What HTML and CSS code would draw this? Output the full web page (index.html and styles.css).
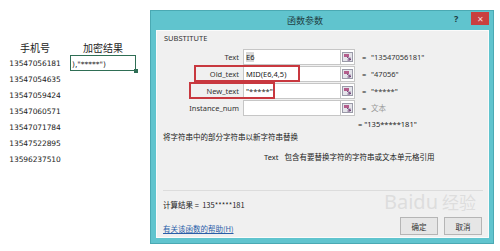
FILE: index.html
```html
<!DOCTYPE html>
<html lang="zh">

<head>
    <meta charset="utf-8">
    <meta name="viewport" content="width=device-width, initial-scale=1.0">
    <title>函数参数</title>

    <link rel="stylesheet" href="styles.css">

</head>

<body>

    <div class="page">

        <section class="sheet">
            <div class="sheet_head">
                <span class="col_a">手机号</span>
                <span class="col_b">加密结果</span>
            </div>
            <div class="sheet_row">
                <span class="col_a num">13547056181</span>
                <span class="col_b cell">),"*****")</span>
            </div>
            <div class="sheet_row"><span class="col_a num">13547054635</span></div>
            <div class="sheet_row"><span class="col_a num">13547059424</span></div>
            <div class="sheet_row"><span class="col_a num">13547060571</span></div>
            <div class="sheet_row"><span class="col_a num">13547071784</span></div>
            <div class="sheet_row"><span class="col_a num">13547522895</span></div>
            <div class="sheet_row"><span class="col_a num">13596237510</span></div>
        </section>

        <div class="dialog">
            <div class="titlebar">
                <span class="title">函数参数</span>
                <span class="help">?</span>
                <span class="close">✕</span>
            </div>

            <div class="content">
                <div class="fname">SUBSTITUTE</div>

                <div class="args">
                    <div class="arg">
                        <label>Text</label>
                        <span class="box"><b class="sel">E6</b></span>
                        <span class="pick"><svg width="11" height="10" viewBox="0 0 11 10"><rect x="0.5" y="0.5" width="10" height="9" fill="#e4e4ea" stroke="#9a9aa8"/><path d="M2 2h5v3H2z" fill="#b45d8c"/><path d="M5 5l4 3M8 5.5v2.5H5.5" stroke="#6a3a70" fill="none"/></svg></span>
                        <span class="eq">=</span>
                        <span class="val">"13547056181"</span>
                    </div>
                    <div class="arg">
                        <label>Old_text</label>
                        <span class="box">MID(E6,4,5)</span>
                        <span class="pick"><svg width="11" height="10" viewBox="0 0 11 10"><rect x="0.5" y="0.5" width="10" height="9" fill="#e4e4ea" stroke="#9a9aa8"/><path d="M2 2h5v3H2z" fill="#b45d8c"/><path d="M5 5l4 3M8 5.5v2.5H5.5" stroke="#6a3a70" fill="none"/></svg></span>
                        <span class="eq">=</span>
                        <span class="val">"47056"</span>
                        <span class="mark mark_old"></span>
                    </div>
                    <div class="arg">
                        <label>New_text</label>
                        <span class="box">"*****"</span>
                        <span class="pick"><svg width="11" height="10" viewBox="0 0 11 10"><rect x="0.5" y="0.5" width="10" height="9" fill="#e4e4ea" stroke="#9a9aa8"/><path d="M2 2h5v3H2z" fill="#b45d8c"/><path d="M5 5l4 3M8 5.5v2.5H5.5" stroke="#6a3a70" fill="none"/></svg></span>
                        <span class="eq">=</span>
                        <span class="val">"*****"</span>
                        <span class="mark mark_new"></span>
                    </div>
                    <div class="arg">
                        <label>Instance_num</label>
                        <span class="box"></span>
                        <span class="pick"><svg width="11" height="10" viewBox="0 0 11 10"><rect x="0.5" y="0.5" width="10" height="9" fill="#e4e4ea" stroke="#9a9aa8"/><path d="M2 2h5v3H2z" fill="#b45d8c"/><path d="M5 5l4 3M8 5.5v2.5H5.5" stroke="#6a3a70" fill="none"/></svg></span>
                        <span class="eq">=</span>
                        <span class="val dim">文本</span>
                    </div>
                </div>

                <div class="result">= "135*****181"</div>
                <p class="desc">将字符串中的部分字符串以新字符串替换</p>
                <p class="param"><span class="pname">Text</span>包含有要替换字符的字符串或文本单元格引用</p>

                <div class="foot">
                    <p class="calc">计算结果 =&nbsp; 135*****181</p>
                    <div class="foot_row">
                        <a href="#" class="helplink">有关该函数的帮助(H)</a>
                        <div class="buttons">
                            <button class="btn">确定</button>
                            <button class="btn">取消</button>
                        </div>
                    </div>
                </div>

                <span class="watermark">Baidu<small>经验</small></span>
            </div>
        </div>

    </div>

</body></html>
```

FILE: styles.css
```css
html {
    background-color: white;
}

body {
    margin: 0;
    font-family: "Noto Sans", "Noto Sans CJK SC", sans-serif;
    color: #222;
}

.page {
    display: flex;
    align-items: flex-start;
}

/* regnearket til venstre */

.sheet {
    width: 150px;
    padding-top: 40px;
    font-size: 8.5px;
}

.sheet_head {
    display: flex;
    height: 15px;
    align-items: center;
    font-family: "Noto Sans CJK SC", sans-serif;
    font-size: 10px;
}

.sheet_row {
    display: flex;
    height: 16px;
    align-items: center;
}

.col_a {
    width: 70px;
    text-align: center;
}

.col_b {
    width: 66px;
    text-align: center;
}

.num {
    font-family: "DejaVu Sans", sans-serif;
    font-size: 7.5px;
    letter-spacing: -0.1px;
}

.cell {
    position: relative;
    box-sizing: border-box;
    height: 16px;
    border: 1.5px solid #2f6e55;
    text-align: left;
    padding-left: 1px;
    font-family: "DejaVu Sans", sans-serif;
    font-size: 7.5px;
    line-height: 17px;
}

.cell::after {
    content: "";
    position: absolute;
    right: -3px;
    bottom: -3px;
    width: 4px;
    height: 4px;
    background: #2f6e55;
}

/* dialogboksen */

.dialog {
    margin-top: 10px;
    width: 344px;
    height: 234px;
    box-sizing: border-box;
    display: flex;
    flex-direction: column;
    overflow: hidden;
    background-color: #60c4ce;
    border: 1px solid #4aa9b3;
    padding: 0 4px 5px 5px;
}

.titlebar {
    height: 19px;
    flex-shrink: 0;
    display: flex;
    align-items: center;
}

.title {
    flex: 1;
    text-align: center;
    font-family: "Noto Sans CJK SC", sans-serif;
    font-size: 9px;
    color: #1f3f44;
}

.help {
    width: 12px;
    font-size: 9px;
    font-weight: bold;
    color: #1c3a40;
    margin-right: 5px;
    margin-top: -4px;
}

.close {
    width: 18px;
    height: 13px;
    background-color: #c9403f;
    color: #f7d7d7;
    font-size: 8px;
    text-align: center;
    line-height: 13px;
    margin-top: -4px;
}

.content {
    flex: 1;
    background-color: #f0f0f0;
    border: 1px solid #fbfbfb;
    box-sizing: border-box;
    padding: 2px 5px 0 6px;
    font-size: 7.5px;
    position: relative;
    overflow: hidden;
}

.fname {
    font-size: 7.5px;
    color: #333;
    height: 10px;
    margin-left: 1px;
}

.args {
    margin-top: 5px;
}

.arg {
    display: flex;
    align-items: center;
    height: 17px;
    position: relative;
}

.arg label {
    width: 76px;
    text-align: right;
    padding-right: 4px;
    color: #333;
}

.box {
    box-sizing: border-box;
    width: 98px;
    height: 16px;
    background: white;
    border: 1px solid #c6c6c6;
    padding-left: 2px;
    line-height: 14px;
}

.sel {
    font-weight: normal;
    background: #d8d8d8;
}

.pick {
    width: 14px;
    height: 16px;
    box-sizing: border-box;
    border: 1px solid #c6c6c6;
    border-left: none;
    background: white;
    display: flex;
    align-items: center;
    justify-content: center;
}

.eq {
    margin-left: 7px;
    width: 9px;
}

.val {
    color: #333;
}

.dim {
    color: #999;
    font-family: "Noto Sans CJK SC", sans-serif;
}

.mark {
    position: absolute;
    border: 2px solid #c8383f;
    top: 0;
    height: 17px;
    box-sizing: border-box;
}

.mark_old {
    left: 31px;
    width: 106px;
}

.mark_new {
    left: 26px;
    width: 86px;
}

.result {
    margin-top: 3px;
    margin-left: 195px;
    height: 10px;
}

p {
    margin: 0;
}

.desc {
    margin-top: 2px;
    font-family: "Noto Sans CJK SC", sans-serif;
    font-size: 7.5px;
}

.param {
    margin-top: 9px;
    margin-left: 101px;
    font-family: "Noto Sans CJK SC", sans-serif;
    font-size: 7.5px;
}

.pname {
    font-family: "Noto Sans", sans-serif;
    margin-right: 6px;
}

.foot {
    position: absolute;
    left: 6px;
    right: 5px;
    top: 159px;
    border-top: 1px solid #dcdcdc;
    padding-top: 8px;
}

.calc {
    font-family: "Noto Sans CJK SC", sans-serif;
    font-size: 7.5px;
}

.foot_row {
    display: flex;
    justify-content: space-between;
    align-items: flex-end;
    margin-top: 7px;
}

.helplink {
    font-family: "Noto Sans CJK SC", sans-serif;
    font-size: 7.5px;
    color: #2a5ea8;
    text-decoration: underline;
    margin-bottom: 1px;
}

.buttons {
    display: flex;
    gap: 6px;
    margin-right: 1px;
}

.btn {
    width: 38px;
    height: 18px;
    padding: 0;
    font-family: "Noto Sans CJK SC", sans-serif;
    font-size: 7.5px;
    background: #e6e6e6;
    border: 1px solid #b5b5b5;
    color: #333;
}

.watermark {
    position: absolute;
    right: 12px;
    top: 157px;
    font-size: 20px;
    color: rgba(205, 205, 205, 0.55);
    font-family: "Noto Sans", "Noto Sans CJK SC", sans-serif;
    pointer-events: none;
}

.watermark small {
    font-size: 17px;
    margin-left: 4px;
}
```
